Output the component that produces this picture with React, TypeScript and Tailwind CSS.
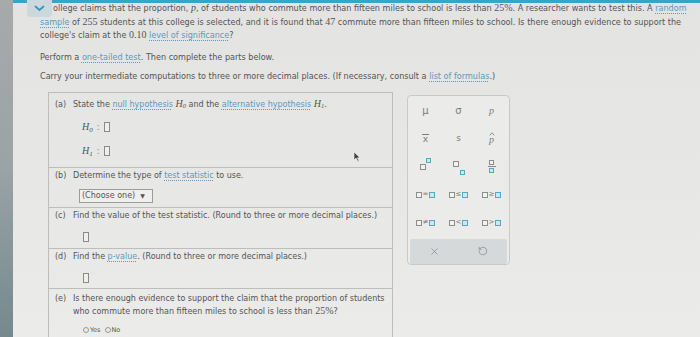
import { X, RotateCcw } from "lucide-react";

const link = "text-[#6497bb] underline decoration-dotted underline-offset-2";
const num = "font-['Liberation_Serif',serif] text-[10px] leading-none";

function Box({ className = "" }: { className?: string }) {
  return <span className={`inline-block w-[6px] h-[10px] border border-[#8a8a8a] bg-[#f1efe6] align-middle ${className}`} />;
}

function Sq({ blue = false, small = false }: { blue?: boolean; small?: boolean }) {
  return (
    <span
      className={`inline-block ${small ? "w-[5px] h-[5px]" : "w-[6px] h-[6px]"} border ${
        blue ? "border-[#5aa5c6] bg-[#cde6ef]" : "border-[#8d8d8d] bg-[#f2f2f0]"
      }`}
    />
  );
}

function Rel({ op }: { op: string }) {
  return (
    <span className="flex items-center gap-[1px] text-[7px] text-[#777]">
      <Sq />
      <span>{op}</span>
      <Sq blue />
    </span>
  );
}

function Palette() {
  const cell = "h-[28px] flex items-center justify-center";
  return (
    <div className="ml-[14px] mt-[3px] w-[103px] h-[170px] rounded-[4px] border border-[#c9c9c9] bg-[#ebebea] flex flex-col px-[1px] pt-[1px]">
      <div className="grid grid-cols-3 text-[#7d7d7d]">
        <div className={`${cell} text-[10px] font-['DejaVu_Sans',sans-serif]`}>μ</div>
        <div className={`${cell} text-[10px] font-['DejaVu_Sans',sans-serif]`}>σ</div>
        <div className={`${cell} text-[10px] italic font-['Liberation_Serif',serif]`}>p</div>
        <div className={`${cell} text-[9px] font-['DejaVu_Sans',sans-serif]`}>
          <span className="border-t border-[#7d7d7d] leading-[9px] px-[1px]">x</span>
        </div>
        <div className={`${cell} text-[9px] font-['DejaVu_Sans',sans-serif]`}>s</div>
        <div className={`${cell} flex-col text-[10px] italic font-['Liberation_Serif',serif]`}>
          <svg width="6" height="4" viewBox="0 0 6 4" className="mb-[-1px]">
            <path d="M0.8 3.4 L3 0.8 L5.2 3.4" fill="none" stroke="#7d7d7d" strokeWidth="0.8" />
          </svg>
          <span className="leading-[10px]">p</span>
        </div>
        <div className={cell}>
          <span className="flex items-start">
            <span className="mt-[3px]"><Sq /></span>
            <Sq blue small />
          </span>
        </div>
        <div className={cell}>
          <span className="flex items-end gap-[1px]">
            <span className="mb-[3px]"><Sq /></span>
            <Sq blue small />
          </span>
        </div>
        <div className={cell}>
          <span className="flex flex-col items-center">
            <Sq small />
            <span className="w-[8px] h-px bg-[#888] my-[1px]" />
            <Sq blue small />
          </span>
        </div>
        <div className={cell}><Rel op="=" /></div>
        <div className={cell}><Rel op="≤" /></div>
        <div className={cell}><Rel op="≥" /></div>
        <div className={cell}><Rel op="≠" /></div>
        <div className={cell}><Rel op="<" /></div>
        <div className={cell}><Rel op=">" /></div>
      </div>
      <div className="mt-[2px] mx-[1px] h-[25px] rounded-[2px] bg-[#d6d9da] flex items-center justify-around">
        <X size={11} strokeWidth={1.3} className="text-[#6f7a7f]" />
        <RotateCcw size={10} strokeWidth={1.4} className="text-[#6f7a7f]" />
      </div>
    </div>
  );
}

function Pointer() {
  return (
    <svg width="8" height="11" viewBox="0 0 8 11" className="absolute left-[304px] top-[58px]">
      <path d="M1 1 L1 9 L3 7 L5 10.5 L6 10 L4.5 6.8 L7 6.8 Z" fill="#3f4448" stroke="#f4f4f4" strokeWidth="0.6" />
    </svg>
  );
}

export default function App() {
  return (
    <div className="w-[700px] h-[337px] overflow-hidden flex bg-gradient-to-b from-[#e3e3e1] to-[#ebebe9] font-['DejaVu_Sans',sans-serif] text-[#545454]">
      <div className="w-[13px] h-full bg-gradient-to-b from-[#a7aaab] via-[#9aa3a5] to-[#74898e]" />
      <div className="flex-1 relative">
        <div className="absolute top-0 left-0 right-0 h-[3px] bg-[#3aa3c8]" />
        <div className="absolute top-0 left-[14px] w-[25px] h-[17px] rounded-b-[3px] bg-[#cbd9de] flex items-center justify-center">
          <svg width="11" height="7" viewBox="0 0 11 7">
            <path d="M1.5 1.5 L5.5 5 L9.5 1.5" fill="none" stroke="#3f93c4" strokeWidth="1.8" strokeLinecap="round" />
          </svg>
        </div>

        <div className="pl-[27px] pt-[2px] text-[8.1px] leading-[13.5px] whitespace-nowrap">
          <div className="pl-[13px]">
            ollege claims that the proportion, <span className={`italic ${num}`}>p</span>, of students who commute more than fifteen miles to school is less than <span className={num}>25%</span>. A researcher wants to test this. A <span className={link}>random</span>
          </div>
          <div>
            <span className={link}>sample</span> of <span className={num}>255</span> students at this college is selected, and it is found that <span className={num}>47</span> commute more than fifteen miles to school. Is there enough evidence to support the
          </div>
          <div>
            college's claim at the <span className={num}>0.10</span> <span className={link}>level of significance</span>?
          </div>
          <div className="mt-[8px]">
            Perform a <span className={link}>one-tailed test</span>. Then complete the parts below.
          </div>
          <div className="mt-[6px]">
            Carry your intermediate computations to three or more decimal places. (If necessary, consult a <span className={link}>list of formulas</span>.)
          </div>

          <div className="mt-[8px] ml-[8px] flex items-start">
            <div className="w-[345px] h-[260px] border border-[#bdbdbb] text-[8px] leading-[13px]">
              <div className="relative h-[75px] border-b border-[#bdbdbb] pl-[6px] pt-[5px]">
                <div>
                  <span className="inline-block w-[18px]">(a)</span>State the <span className={link}>null hypothesis</span>{" "}
                  <span className={`italic ${num}`}>H<sub className="text-[6.5px]">0</sub></span> and the{" "}
                  <span className={link}>alternative hypothesis</span>{" "}
                  <span className={`italic ${num}`}>H<sub className="text-[6.5px]">1</sub></span>.
                </div>
                <div className="pl-[27px] mt-[9px] flex items-center gap-[4px] h-[14px] font-['Liberation_Serif',serif] text-[10px]">
                  <span className="italic">H<sub className="text-[7px]">0</sub></span>
                  <span className="text-[#8a8a8a]">:</span>
                  <Box />
                </div>
                <div className="pl-[27px] mt-[10px] flex items-center gap-[4px] h-[14px] font-['Liberation_Serif',serif] text-[10px]">
                  <span className="italic">H<sub className="text-[7px]">1</sub></span>
                  <span className="text-[#8a8a8a]">:</span>
                  <Box />
                </div>
                <Pointer />
              </div>
              <div className="h-[40px] border-b border-[#bdbdbb] pl-[6px] pt-[1px]">
                <div>
                  <span className="inline-block w-[18px]">(b)</span>Determine the type of <span className={link}>test statistic</span> to use.
                </div>
                <div className="ml-[24px] mt-[7px] w-[74px] h-[14px] border border-[#9c9c9c] bg-[#efefed] flex items-center pl-[2px] gap-[5px] text-[#555]">
                  (Choose one) <span className="text-[6px]">▼</span>
                </div>
              </div>
              <div className="h-[41px] border-b border-[#bdbdbb] pl-[6px] pt-[1px]">
                <div>
                  <span className="inline-block w-[18px]">(c)</span>Find the value of the test statistic. (Round to three or more decimal places.)
                </div>
                <div className="pl-[28px] mt-[9px]"><Box /></div>
              </div>
              <div className="h-[40px] border-b border-[#bdbdbb] pl-[6px] pt-[1px]">
                <div>
                  <span className="inline-block w-[18px]">(d)</span>Find the <span className={link}>p-value</span>. (Round to three or more decimal places.)
                </div>
                <div className="pl-[28px] mt-[9px]"><Box /></div>
              </div>
              <div className="pl-[6px] pt-[3px]">
                <div>
                  <span className="inline-block w-[18px]">(e)</span>Is there enough evidence to support the claim that the proportion of students
                </div>
                <div className="pl-[18px]">
                  who commute more than fifteen miles to school is less than <span className={num}>25%</span>?
                </div>
                <div className="pl-[28px] mt-[8px] flex items-center gap-[4px] text-[6.5px] leading-[8px]">
                  <span className="flex items-center gap-[1px]"><span className="w-[6px] h-[6px] rounded-full border border-[#999]" />Yes</span>
                  <span className="flex items-center gap-[1px]"><span className="w-[6px] h-[6px] rounded-full border border-[#999]" />No</span>
                </div>
              </div>
            </div>
            <Palette />
          </div>
        </div>
      </div>
    </div>
  );
}
